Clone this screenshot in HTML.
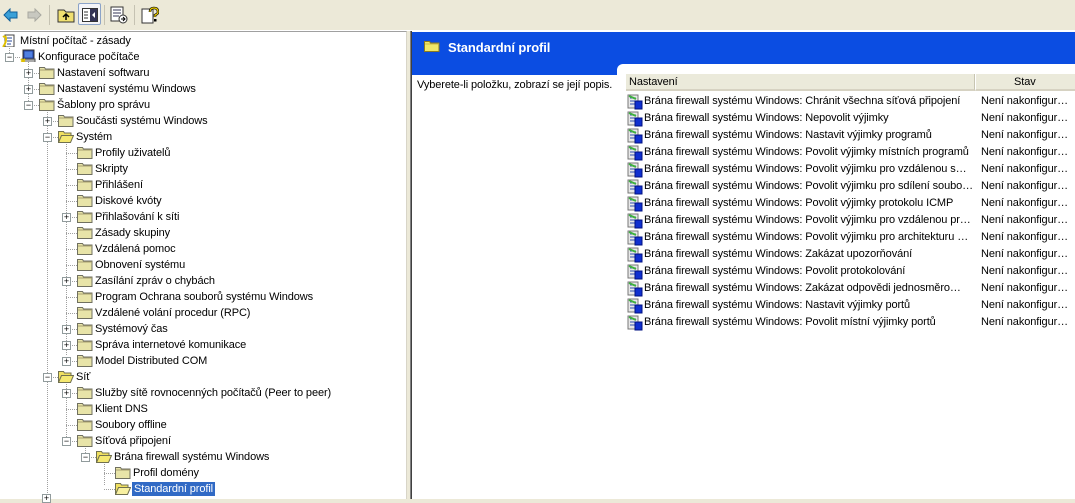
<!DOCTYPE html>
<html><head><meta charset="utf-8"><style>
*{margin:0;padding:0;box-sizing:border-box}
body{width:1075px;height:499px;overflow:hidden;background:#ece9d8;font-family:"Liberation Sans",Tahoma,sans-serif;font-size:11px;color:#000;position:relative}
.a{position:absolute}
.t{position:absolute;white-space:nowrap;line-height:13px;letter-spacing:-0.1px}
.vl{position:absolute;width:1px;border-left:1px dotted #a0a0a0}
.hl{position:absolute;height:1px;border-top:1px dotted #a0a0a0}
.bx{position:absolute;width:9px;height:9px;border:1px solid #919b9c;background:#fff;font-size:9px;line-height:7px;text-align:center;color:#000}
.f{position:absolute;width:16px;height:13px}
</style></head><body>
<!-- toolbar -->
<svg class="a" style="left:3px;top:8px" width="16" height="14"><path d="M1 7 L7 1 L7 4 L14 4 L14 10 L7 10 L7 13 Z" fill="#3aa0d8" stroke="#0f5f9a"/></svg>
<svg class="a" style="left:26px;top:8px" width="16" height="14"><path d="M15 7 L9 1 L9 4 L2 4 L2 10 L9 10 L9 13 Z" fill="#c8c8c0" stroke="#a8a8a0"/></svg>
<div class="a" style="left:49px;top:5px;width:1px;height:20px;background:#c5c2b2"></div>
<svg class="a" style="left:57px;top:7px" width="18" height="16"><path d="M1 3h6l2 2h8v10H1z" fill="#f0e070" stroke="#333"/><path d="M9 13V8M6 10l3-3 3 3" stroke="#000" fill="none" stroke-width="1.5"/></svg>
<div class="a" style="left:78px;top:3px;width:23px;height:22px;border:1px solid #8ba3c8;background:#f4f4f8;border-radius:2px"></div>
<svg class="a" style="left:82px;top:8px" width="16" height="14"><rect x="0.5" y="0.5" width="15" height="13" fill="#fff" stroke="#333"/><rect x="8" y="1" width="7" height="12" fill="#335"/><path d="M2 4h4M2 7h4M2 10h4" stroke="#333"/><path d="M13 4l-3 3 3 3z" fill="#fff"/></svg>
<div class="a" style="left:104px;top:5px;width:1px;height:20px;background:#c5c2b2"></div>
<svg class="a" style="left:110px;top:6px" width="18" height="18"><rect x="1" y="1" width="12" height="14" fill="#fff" stroke="#333"/><path d="M3 4h8M3 7h8M3 10h6" stroke="#335"/><circle cx="13" cy="13" r="4" fill="#fff" stroke="#333"/><path d="M11 13h4M13 11l2 2-2 2" stroke="#000" fill="none"/></svg>
<div class="a" style="left:134px;top:5px;width:1px;height:20px;background:#c5c2b2"></div>
<svg class="a" style="left:141px;top:6px" width="18" height="18"><rect x="1" y="3" width="11" height="14" fill="#fff" stroke="#333"/><path d="M9 6q0-4 4-4t4 4q0 2-3 3v2" stroke="#000" stroke-width="2.5" fill="none"/><path d="M9 6q0-4 4-4t4 4q0 2-3 3v2" stroke="#f0d000" stroke-width="1.2" fill="none"/><rect x="13" y="13" width="2.5" height="2.5" fill="#000"/></svg>
<div class="a" style="left:0;top:30px;width:1075px;height:1px;background:#fff"></div>

<div class="a" style="left:0;top:31px;width:407px;height:468px;background:#fff;border-top:1px solid #a0a0a0;border-right:1px solid #d8d5c8"></div>
<div class="a" style="left:410px;top:31px;width:1px;height:468px;background:#808080"></div>
<div class="a" style="left:411px;top:31px;width:1px;height:468px;background:#404040"></div>

<div class="vl" style="left:9px;top:41px;height:14px"></div>
<div class="vl" style="left:28px;top:57px;height:44px"></div>
<div class="vl" style="left:47px;top:105px;height:394px"></div>
<div class="vl" style="left:66px;top:137px;height:218px"></div>
<div class="vl" style="left:66px;top:377px;height:60px"></div>
<div class="vl" style="left:85px;top:441px;height:12px"></div>
<div class="vl" style="left:104px;top:457px;height:28px"></div>
<div id="tree"></div>
<div class="bx" style="left:42px;top:494px">+</div>

<div class="a" style="left:412px;top:31px;width:663px;height:468px;background:#fff"></div>
<div class="a" style="left:412px;top:32px;width:663px;height:40px;background:#0b4de2"></div>
<div class="a" style="left:412px;top:72px;width:205px;height:3px;background:#0b4de2"></div>
<div class="a" style="left:617px;top:64px;width:458px;height:12px;background:#fff;border-top-left-radius:6px"></div>
<svg class="a" style="left:424px;top:39px" width="16" height="13"><path d="M0.5 2.5h5l1 1.5h8.5v8.5H0.5z" fill="#f0e868" stroke="#8a7a20"/><path d="M1 5h14" stroke="#c8b848"/></svg>
<div class="t" style="left:448px;top:40px;color:#fff;font-size:13px;font-weight:bold;line-height:15px">Standardní profil</div>
<div class="t" style="left:417px;top:79px">Vyberete-li položku, zobrazí se její popis.</div>

<div class="a" style="left:626px;top:74px;width:349px;height:17px;background:#ebeadb;border-bottom:2px solid #d6d2c2;border-right:1px solid #c7c5b2"></div>
<div class="t" style="left:629px;top:76px">Nastavení</div>
<div class="a" style="left:975px;top:74px;width:100px;height:17px;background:#ebeadb;border-bottom:2px solid #d6d2c2;border-left:1px solid #fff"></div>
<div class="t" style="left:1014px;top:76px">Stav</div>
<div id="list"></div>

<script>
var tr=[
[40,0,'','Místní počítač - zásady','root'],
[56,1,'−','Konfigurace počítače','comp'],
[72,2,'+','Nastavení softwaru'],
[88,2,'+','Nastavení systému Windows'],
[104,2,'−','Šablony pro správu'],
[120,3,'+','Součásti systému Windows'],
[136,3,'−','Systém','open'],
[152,4,'','Profily uživatelů'],
[168,4,'','Skripty'],
[184,4,'','Přihlášení'],
[200,4,'','Diskové kvóty'],
[216,4,'+','Přihlašování k síti'],
[232,4,'','Zásady skupiny'],
[248,4,'','Vzdálená pomoc'],
[264,4,'','Obnovení systému'],
[280,4,'+','Zasílání zpráv o chybách'],
[296,4,'','Program Ochrana souborů systému Windows'],
[312,4,'','Vzdálené volání procedur (RPC)'],
[328,4,'+','Systémový čas'],
[344,4,'+','Správa internetové komunikace'],
[360,4,'+','Model Distributed COM'],
[376,3,'−','Síť','open'],
[392,4,'+','Služby sítě rovnocenných počítačů (Peer to peer)'],
[408,4,'','Klient DNS'],
[424,4,'','Soubory offline'],
[440,4,'−','Síťová připojení'],
[456,5,'−','Brána firewall systému Windows','open'],
[472,6,'','Profil domény'],
[488,6,'','Standardní profil','sel']];
var h='';
tr.forEach(function(r){
 var y=r[0]-7,l=r[1],ix=l==0?2:20+19*(l-1),cx=9+19*(l-1),yc=y+8;
 if(l>0){h+='<div class="hl" style="left:'+cx+'px;top:'+yc+'px;width:'+(ix-cx)+'px"></div>';}
 if(r[2])h+='<div class="bx" style="left:'+(cx-4)+'px;top:'+(yc-4)+'px">'+(r[2]=='+'?'+':'−')+'</div>';
 var k=r[4];
 if(k=='root')h+='<svg class="f" style="left:'+ix+'px;top:'+(y+1)+'px" height="15"><path d="M3 1h9v12H3z" fill="#fff" stroke="#444"/><path d="M5 4h5M5 7h5M5 10h4" stroke="#2a4a9a"/><path d="M1 3q3-2 3 2t-3 8" stroke="#e0c000" stroke-width="2" fill="none"/></svg>';
 else if(k=='comp')h+='<svg class="f" style="left:'+ix+'px;top:'+y+'px" height="16"><rect x="3" y="1" width="11" height="9" fill="#2040a0" stroke="#333"/><rect x="4.5" y="2.5" width="8" height="6" fill="#5080e0"/><rect x="2" y="10" width="13" height="4" fill="#aaa" stroke="#555"/><path d="M1 10l4 4M5 10l-4 4" stroke="#e0c000" stroke-width="2"/></svg>';
 else if(k=='open'||k=='sel')h+='<svg class="f" style="left:'+ix+'px;top:'+(y+1)+'px"><path d="M0.5 1.5h5l1 1.5h6.5v3H3.5L0.5 12.5z" fill="#f0e060" stroke="#707050"/><path d="M3.5 5.5h12l-3 7H0.5z" fill="'+(k=='sel'?'#f8f0a0':'#f4e870')+'" stroke="#707050"/></svg>';
 else h+='<svg class="f" style="left:'+ix+'px;top:'+(y+1)+'px"><path d="M0.5 1.5h5l1 1.5h8.5v9.5H0.5z" fill="#e8e4a8" stroke="#707060"/><path d="M1 4h14" stroke="#a8a070"/></svg>';
 var tx=ix+18;
 if(k=='sel')h+='<div class="t" style="left:'+(tx-1)+'px;top:'+(y+1)+'px;background:#316ac5;color:#fff;padding:0 2px;height:14px;line-height:14px">'+r[3]+'</div>';
 else h+='<div class="t" style="left:'+tx+'px;top:'+(y+2)+'px">'+r[3]+'</div>';
});
document.getElementById('tree').innerHTML=h;
var li=['Chránit všechna síťová připojení','Nepovolit výjimky','Nastavit výjimky programů','Povolit výjimky místních programů','Povolit výjimku pro vzdálenou s…','Povolit výjimku pro sdílení soubo…','Povolit výjimky protokolu ICMP','Povolit výjimku pro vzdálenou pr…','Povolit výjimku pro architekturu …','Zakázat upozorňování','Povolit protokolování','Zakázat odpovědi jednosměro…','Nastavit výjimky portů','Povolit místní výjimky portů'];
var g='';
li.forEach(function(s,i){var y=93+17*i;
 g+='<svg class="a" style="left:627px;top:'+(y+1)+'px" width="16" height="16"><rect x="1" y="1" width="10" height="13" fill="#e8e8e8" stroke="#777"/><path d="M3 4h6M3 7h5M3 10h5" stroke="#3050b0"/><path d="M2 2l7 3" stroke="#40b040" stroke-width="2"/><rect x="8" y="7" width="7" height="8" fill="#1030d0" stroke="#001080"/></svg>';
 g+='<div class="t" style="left:644px;top:'+(y+2)+'px;max-width:333px;overflow:hidden">Brána firewall systému Windows: '+s+'</div>';
 g+='<div class="t" style="left:981px;top:'+(y+2)+'px">Není nakonfigur…</div>';});
document.getElementById('list').innerHTML=g;
</script>
</body></html>
